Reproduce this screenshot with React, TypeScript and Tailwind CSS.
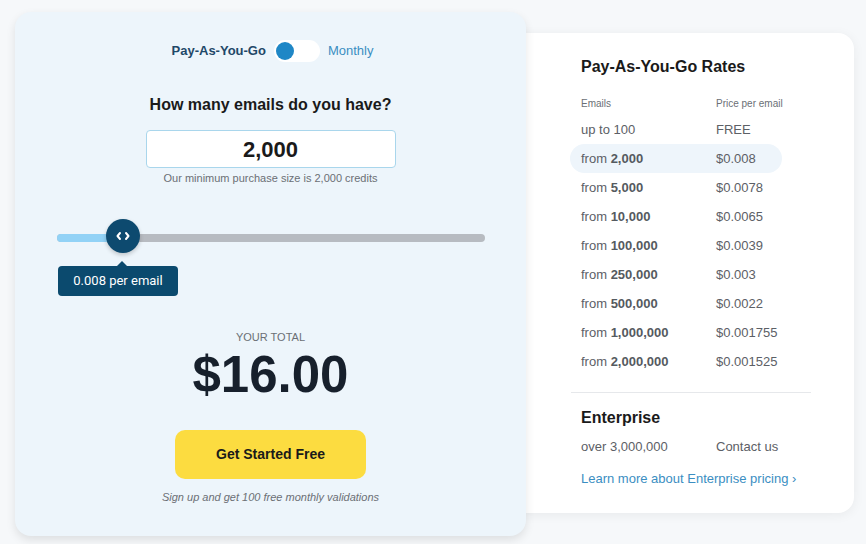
import React from "react";

const rows: { a: string; b?: string; p: string; hl?: boolean }[] = [
  { a: "up to 100", p: "FREE" },
  { a: "from ", b: "2,000", p: "$0.008", hl: true },
  { a: "from ", b: "5,000", p: "$0.0078" },
  { a: "from ", b: "10,000", p: "$0.0065" },
  { a: "from ", b: "100,000", p: "$0.0039" },
  { a: "from ", b: "250,000", p: "$0.003" },
  { a: "from ", b: "500,000", p: "$0.0022" },
  { a: "from ", b: "1,000,000", p: "$0.001755" },
  { a: "from ", b: "2,000,000", p: "$0.001525" },
];

export default function App() {
  return (
    <div
      className="w-[866px] h-[544px] overflow-hidden bg-[#f6f8fa] flex items-start pl-[15px] pt-[12px]"
      style={{ fontFamily: '"Liberation Sans", Arial, sans-serif' }}
    >
      {/* Left card */}
      <div className="relative z-10 w-[511px] h-[524px] rounded-[16px] bg-[#edf5fb] shadow-[0_4px_10px_rgba(0,0,0,0.10)] flex flex-col items-center pt-[28px]">
        {/* toggle */}
        <div className="flex items-center gap-[8px] h-[22px] ml-[4px]">
          <span className="text-[13px] font-bold text-[#1f4868]">Pay-As-You-Go</span>
          <div className="w-[46px] h-[22px] rounded-full bg-white flex items-center pl-[2px]">
            <div className="w-[18px] h-[18px] rounded-full bg-[#1f87c6]" />
          </div>
          <span className="text-[13px] text-[#3b8ec2]">Monthly</span>
        </div>

        <div className="mt-[33px] text-[16px] font-bold text-[#1a1a1a] leading-[20px]">
          How many emails do you have?
        </div>

        <div className="mt-[15px] w-[250px] h-[38px] bg-white border border-[#a9d6ec] rounded-[4px] flex items-center justify-center">
          <span className="text-[22px] font-bold text-[#1a1a1a]">2,000</span>
        </div>
        <div className="mt-[3px] text-[11px] text-[#6b6f75] leading-[14px]">
          Our minimum purchase size is 2,000 credits
        </div>

        {/* slider */}
        <div className="relative mt-[34px] w-[428px] h-[34px] self-start ml-[42px] flex items-center">
          <div className="w-full h-[8px] rounded-full bg-[#b7bbc1] flex mt-[4px]">
            <div className="w-[66px] h-full rounded-l-full bg-[#92d2f6]" />
          </div>
          <div className="absolute left-[49px] top-0 w-[34px] h-[34px] rounded-full bg-[#0d4a6f] shadow-[0_2px_4px_rgba(0,0,0,0.2)] flex items-center justify-center">
            <svg width="14" height="10" viewBox="0 0 14 10" fill="none" stroke="white" strokeWidth="2" strokeLinecap="round" strokeLinejoin="round">
              <path d="M4 2 L1.5 5 L4 8" />
              <path d="M10 2 L12.5 5 L10 8" />
            </svg>
          </div>
        </div>
        <div className="relative self-start ml-[43px] mt-[13px] w-[120px] h-[30px] rounded-[4px] bg-[#0b4a6e] flex items-center justify-center">
          <div className="absolute -top-[5px] left-[59px] w-0 h-0 border-l-[5px] border-r-[5px] border-b-[5px] border-l-transparent border-r-transparent border-b-[#0b4a6e]" />
          <span className="text-[13px] text-white" style={{ fontFamily: 'Roboto, "Liberation Sans", sans-serif' }}>
            0.008 per email
          </span>
        </div>

        <div className="mt-[34px] text-[11px] text-[#6b6f75] leading-[14px]">YOUR TOTAL</div>
        <div className="mt-[2px] text-[51px] font-bold text-[#17202c] leading-[58px]">$16.00</div>

        <div className="mt-[26px] w-[191px] h-[49px] rounded-[10px] bg-[#fcdc40] flex items-center justify-center">
          <span className="text-[14px] font-bold text-[#1a1a1a]">Get Started Free</span>
        </div>
        <div className="mt-[11px] text-[11px] italic text-[#6b6f75] leading-[14px]">
          Sign up and get 100 free monthly validations
        </div>
      </div>

      {/* Right card */}
      <div className="-ml-[20px] mt-[21px] w-[348px] h-[480px] rounded-[16px] bg-white shadow-[0_2px_12px_rgba(0,0,0,0.06)] pl-[75px] pr-[43px] pt-[23px] flex flex-col">
        <div className="text-[16px] font-bold text-[#1a1a1a] leading-[22px]">Pay-As-You-Go Rates</div>
        <div className="mt-[20px] grid grid-cols-[135px_1fr] text-[10px] text-[#6b6f75] leading-[12px]">
          <span>Emails</span>
          <span>Price per email</span>
        </div>
        <div className="mt-[5px] flex flex-col">
          {rows.map((r, i) => (
            <div
              key={i}
              className={
                "grid grid-cols-[135px_1fr] h-[29px] items-center text-[13px] text-[#5c6066] -ml-[11px] pl-[11px] w-[212px] rounded-full " +
                (r.hl ? "bg-[#eef5fb]" : "")
              }
            >
              <span>
                {r.a}
                {r.b && <b className="font-bold text-[#555a60]">{r.b}</b>}
              </span>
              <span className="whitespace-nowrap">{r.p}</span>
            </div>
          ))}
        </div>
        <div className="mt-[16px] -ml-[10px] w-[240px] h-px bg-[#e6e8eb]" />
        <div className="mt-[14px] text-[16px] font-bold text-[#1a1a1a] leading-[22px]">Enterprise</div>
        <div className="mt-[10px] grid grid-cols-[135px_1fr] text-[13px] text-[#5c6066] leading-[16px]">
          <span>over 3,000,000</span>
          <span>Contact us</span>
        </div>
        <div className="mt-[16px] text-[13px] text-[#3b8ec2] leading-[16px]">
          Learn more about Enterprise pricing ›
        </div>
      </div>
    </div>
  );
}
